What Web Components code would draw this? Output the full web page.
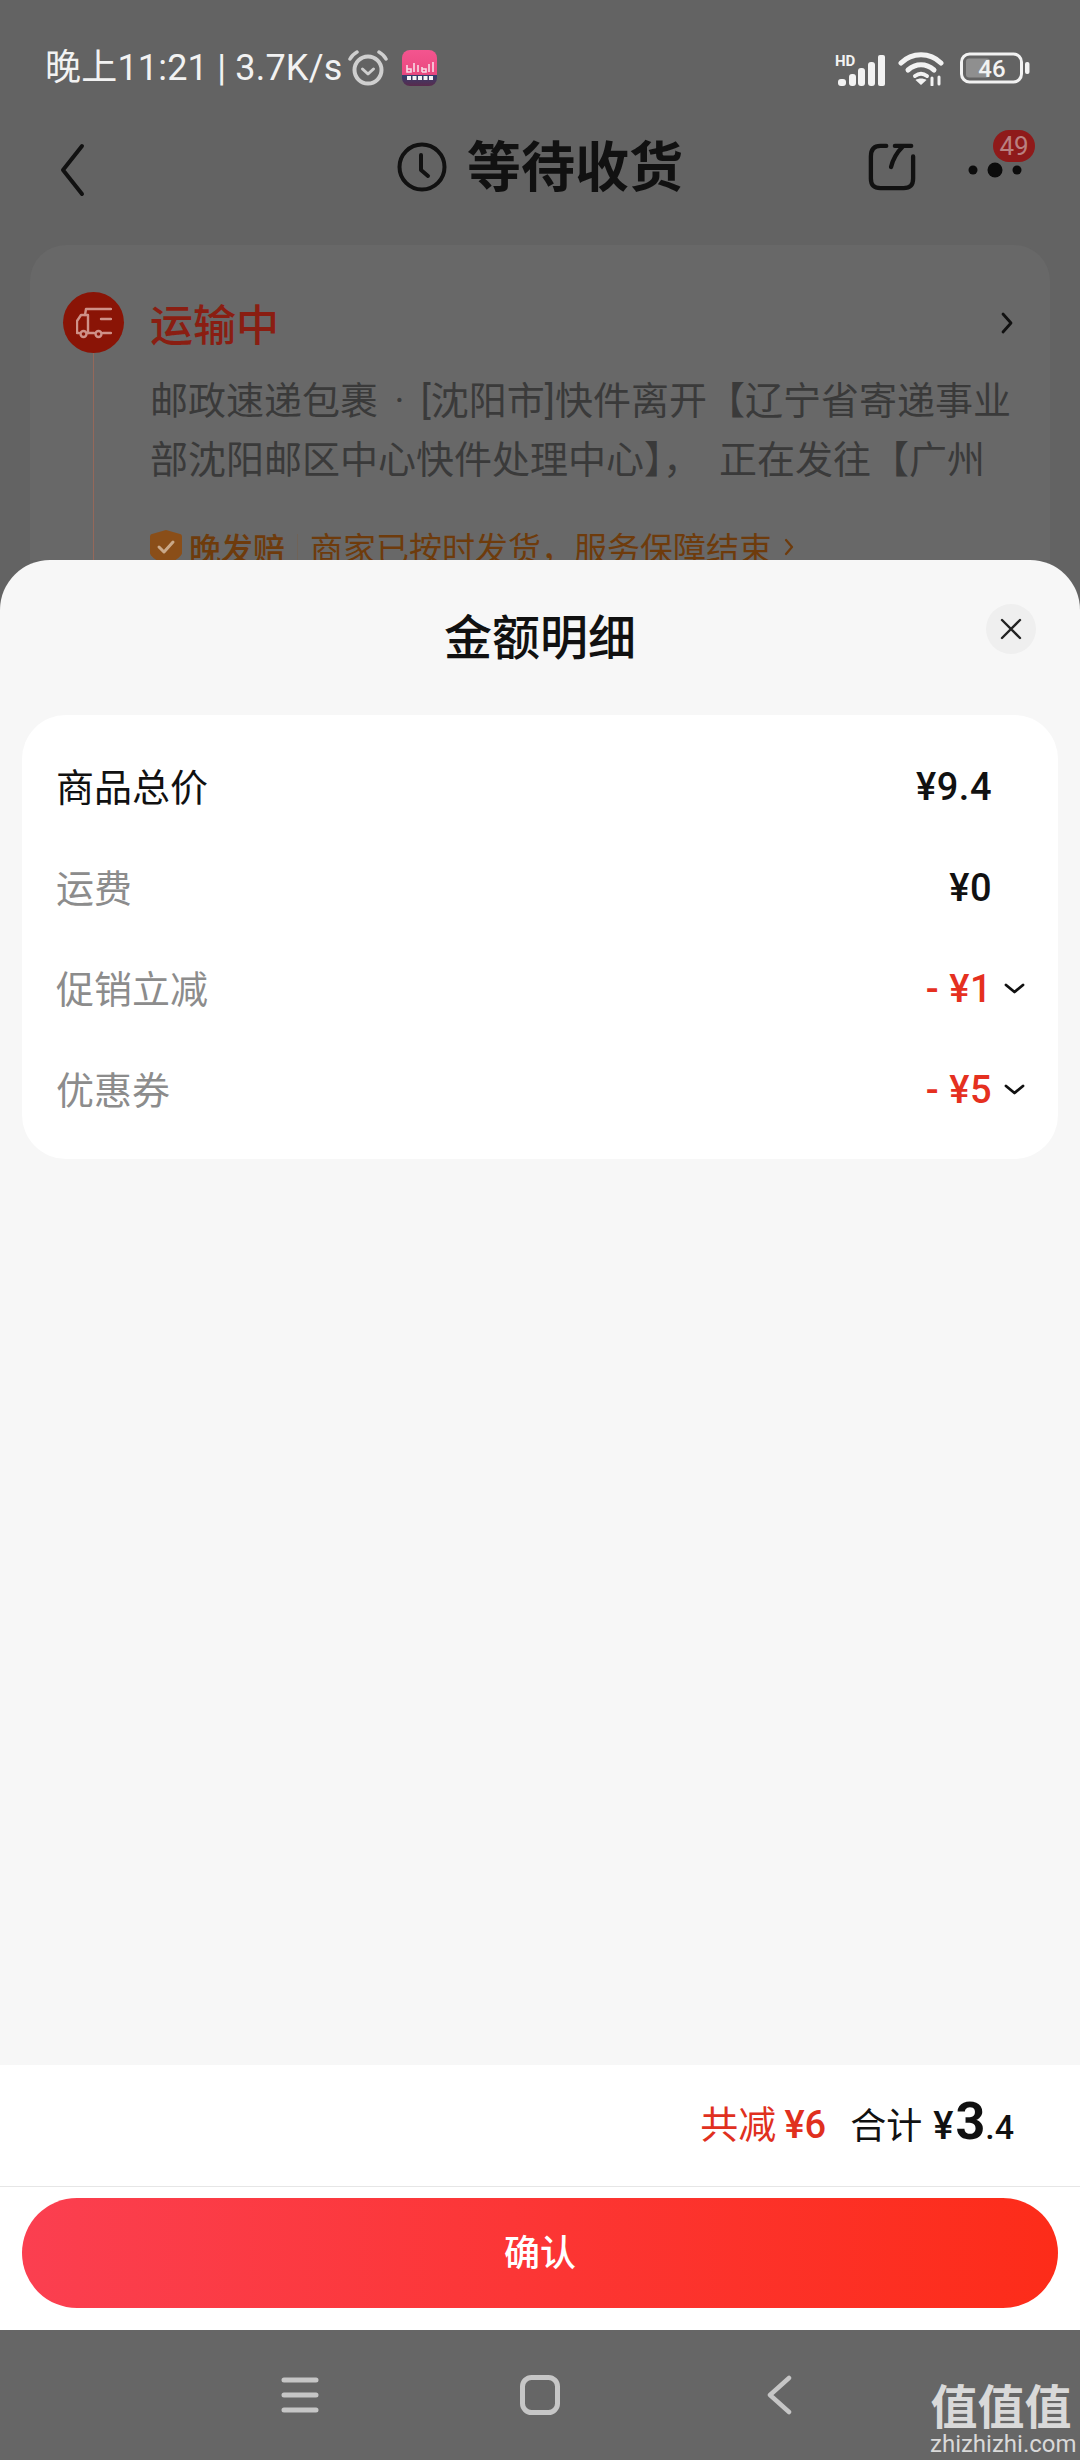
<!DOCTYPE html>
<html lang="zh-CN">
<head>
<meta charset="utf-8">
<title>金额明细</title>
<style>
    html, body { margin: 0; padding: 0; background: #636363; }
    body { font-family: Roboto, "Noto Sans CJK SC", sans-serif; }
</style>
</head>
<body>
<phone-page>
    <order-backdrop>
        <status-bar></status-bar>
        <order-nav>等待收货</order-nav>
        <track-card></track-card>
    </order-backdrop>
    <price-sheet>
        <span slot="title">金额明细</span>
        <price-row strong><span slot="label">商品总价</span>¥9.4</price-row>
        <price-row><span slot="label">运费</span>¥0</price-row>
        <price-row discount><span slot="label">促销立减</span>- ¥1</price-row>
        <price-row discount><span slot="label">优惠券</span>- ¥5</price-row>
        <total-bar slot="footer"></total-bar>
        <confirm-button slot="footer">确认</confirm-button>
    </price-sheet>
    <system-nav></system-nav>
</phone-page>

<script>
class PhonePage extends HTMLElement {
    constructor() {
        super();
        this.attachShadow({ mode: 'open' });
    }
    connectedCallback() {
        this.shadowRoot.innerHTML = `
            <style>
                :host { display: flex; flex-direction: column; width: 1080px; height: 2460px; overflow: hidden; }
            </style>
            <slot></slot>
        `;
    }
}

class OrderBackdrop extends HTMLElement {
    constructor() {
        super();
        this.attachShadow({ mode: 'open' });
    }
    connectedCallback() {
        this.shadowRoot.innerHTML = `
            <style>
                :host { display: block; height: 560px; overflow: hidden; background: #636363; flex-shrink: 0; }
            </style>
            <slot></slot>
        `;
    }
}

class StatusBar extends HTMLElement {
    constructor() {
        super();
        this.attachShadow({ mode: 'open' });
    }
    connectedCallback() {
        this.shadowRoot.innerHTML = `
            <style>
                :host { display: flex; align-items: center; height: 48px; padding: 44px 50px 0 45px; color: #f2f2f2; }
                .time { font-size: 36px; line-height: 48px; white-space: nowrap; letter-spacing: .2px; }
                .alarm { margin-left: 6px; }
                .app { margin-left: 14px; }
                .right { margin-left: auto; display: flex; align-items: center; }
                .wifi { margin-left: 13px; }
                .battery { margin-left: 16px; }
                svg { display: block; flex-shrink: 0; }
            </style>
            <span class="time">晚上11:21 | 3.7K/s</span>
            <svg class="alarm" width="40" height="36" viewBox="0 0 40 36" fill="none" stroke="#cfcfcf">
                <circle cx="20" cy="20" r="13.5" stroke-width="4"/>
                <path d="M14.5 19l5.5 5 5.500-5" stroke-width="3" stroke-linecap="round" stroke-linejoin="round"/>
                <path d="M2 9c1.500-3 3.500-5 7-7M38 9c-1.500-3-3.500-5-7-7" stroke-width="3.500" stroke-linecap="round"/>
            </svg>
            <svg class="app" width="36" height="36" viewBox="0 0 36 36">
                <defs><linearGradient id="bili" x1="0" y1="0" x2="0" y2="1">
                    <stop offset="0" stop-color="#f4558f"/><stop offset=".68" stop-color="#e9487f"/>
                    <stop offset=".7" stop-color="#33406f"/><stop offset="1" stop-color="#5a2a4c"/>
                </linearGradient></defs>
                <rect width="35" height="36" rx="8" fill="url(#bili)"/>
                <path d="M5 15v7h4v-3H5M12 13v9M16 15v7M20 17v5M20 19h4v3h-4M27 14v8M31 12v10" stroke="#f8dbe6" stroke-width="1.600" fill="none"/>
                <path d="M5 28h26" stroke="#f6f6f6" stroke-width="4" stroke-dasharray="4 1.500"/>
            </svg>
            <div class="right">
                <svg width="50" height="38" viewBox="0 -6 50 38">
                    <text x="0" y="11" font-family="Roboto, sans-serif" font-weight="700" font-size="15" fill="#f2f2f2">HD</text>
                    <rect x="3" y="24" width="8" height="7" rx="3" fill="#f2f2f2"/>
                    <rect x="14" y="19" width="7" height="12" rx="3" fill="#f2f2f2"/>
                    <rect x="23" y="13" width="7" height="18" rx="3" fill="#f2f2f2"/>
                    <rect x="33" y="7" width="7" height="24" rx="3" fill="#f2f2f2"/>
                    <rect x="43" y="0" width="7" height="31" rx="2" fill="#f2f2f2"/>
                </svg>
                <svg class="wifi" width="46" height="36" viewBox="0 0 46 36" fill="none" stroke="#f2f2f2" stroke-linecap="round">
                    <path d="M3 13C14 2 32 2 43 13" stroke-width="5"/>
                    <path d="M10 20c8-7 18-7 26 0" stroke-width="5"/>
                    <path d="M17 26c4-3 8-3 12 0" stroke-width="4"/>
                    <path d="M23 35l-5.500-5c3-2 8-2 11 0z" fill="#f2f2f2" stroke="none"/>
                    <path d="M34 28v7M41 27v7" stroke-width="3"/>
                </svg>
                <svg class="battery" width="70" height="32" viewBox="0 0 70 32">
                    <rect x="1.500" y="2" width="60" height="28" rx="8" fill="none" stroke="#f2f2f2" stroke-width="3"/>
                    <rect x="6" y="6.500" width="24" height="19" rx="3" fill="#8f8f8f"/>
                    <rect x="65" y="10" width="4.500" height="12" rx="2" fill="#f2f2f2"/>
                    <text x="32" y="25" text-anchor="middle" font-family="Roboto, sans-serif" font-weight="500" font-size="24" fill="#f2f2f2">46</text>
                </svg>
            </div>
        `;
    }
}

class OrderNav extends HTMLElement {
    constructor() {
        super();
        this.attachShadow({ mode: 'open' });
    }
    connectedCallback() {
        this.shadowRoot.innerHTML = `
            <style>
                :host { display: grid; grid-template-columns: 1fr auto 1fr; align-items: center; height: 72px; padding: 36px 57px 0; color: #111; }
                .back { margin: 6px 0 0 3px; }
                .title { display: flex; align-items: center; gap: 20px; font: 700 54px/72px "Noto Sans CJK SC", sans-serif; }
                .title span { padding-bottom: 6px; }
                .actions { display: flex; justify-content: flex-end; align-items: center; gap: 51px; }
                .more { position: relative; display: block; height: 60px; }
                .badge { position: absolute; top: -7px; right: -12px; width: 42px; height: 32px; border-radius: 16px; background: #8f1a1a; color: #b98080; font: 400 26px/32px Roboto, sans-serif; text-align: center; }
                svg { display: block; }
            </style>
            <svg class="back" width="26" height="56" viewBox="0 0 26 56" fill="none" stroke="#111" stroke-width="4" stroke-linecap="round" stroke-linejoin="round">
                <path d="M22 4L3 28l19 24"/>
            </svg>
            <div class="title">
                <svg width="50" height="50" viewBox="0 0 50 50" fill="none" stroke="#111" stroke-linecap="round" stroke-linejoin="round">
                    <circle cx="25" cy="25" r="22.500" stroke-width="4"/>
                    <path d="M24 13v15l7 6" stroke-width="4"/>
                </svg>
                <span><slot></slot></span>
            </div>
            <div class="actions">
                <svg width="48" height="48" viewBox="0 0 50 50" fill="none" stroke="#111" stroke-width="4.500" stroke-linecap="round" stroke-linejoin="round">
                    <path d="M19 3H13C6 3 3 7 3 14v23c0 7 3 10 10 10h24c7 0 10-3 10-10V14"/>
                    <path d="M24 25c2-8 6-15 12-21M28 3h17"/>
                </svg>
                <div class="more">
                    <svg width="56" height="60" viewBox="0 0 56 60" fill="#0c0c0c">
                        <circle cx="6" cy="33" r="4.500"/><circle cx="28" cy="33" r="7.500"/><circle cx="50" cy="33" r="4.500"/>
                    </svg>
                    <span class="badge">49</span>
                </div>
            </div>
        `;
    }
}

class TrackCard extends HTMLElement {
    constructor() {
        super();
        this.attachShadow({ mode: 'open' });
    }
    connectedCallback() {
        this.shadowRoot.innerHTML = `
            <style>
                :host { display: grid; grid-template-columns: 61px minmax(0, 1fr); column-gap: 26px; margin: 45px 30px 0; padding: 47px 36px 40px 33px; border-radius: 36px; background: #686868; font-family: "Noto Sans CJK SC", sans-serif; }
                .dot { width: 61px; height: 61px; border-radius: 50%; background: #8a1406; display: flex; align-items: center; justify-content: center; }
                .head { display: flex; align-items: center; justify-content: space-between; color: #8a1e12; font: 500 43px/61px "Noto Sans CJK SC", sans-serif; }
                .line { justify-self: center; width: 1px; background: #94685a; }
                .body { margin-top: 19px; font-family: Roboto, "Noto Sans CJK SC", sans-serif; font-size: 38px; line-height: 59px; color: #3a3a3a; white-space: nowrap; }
                .sep { margin: 0 7px; }
                .comma { margin-right: 18px; }
                .tag { display: flex; align-items: center; margin-top: 33px; height: 48px; color: #6e3b0c; font-size: 33px; white-space: nowrap; }
                .tag b { font-weight: 500; font-size: 32px; margin-left: 7px; }
                .tag i { width: 1px; height: 26px; margin: 0 12px; background: #6f6358; }
                .tag .arrow { margin-left: 12px; }
                svg { display: block; }
            </style>
            <div class="dot">
                <svg width="36" height="32" viewBox="0 0 36 32" fill="none" stroke="#cf9188" stroke-width="2.400" stroke-linecap="round" stroke-linejoin="round">
                    <path d="M35 2H10L9 8"/>
                    <path d="M3 26H1V14l4-6h7v18"/>
                    <path d="M25 12h10M27 26h8M12 26h6"/>
                    <circle cx="7.500" cy="27" r="3"/><circle cx="22.500" cy="27" r="3"/>
                </svg>
            </div>
            <div class="head">
                <span>运输中</span>
                <svg width="14" height="22" viewBox="0 0 14 22" fill="none" stroke="#111" stroke-width="2.800" stroke-linecap="round" stroke-linejoin="round"><path d="M3 2l8 9-8 9"/></svg>
            </div>
            <div class="line"></div>
            <div>
                <div class="body">邮政速递包裹<span class="sep"> · </span>[沈阳市]快件离开【辽宁省寄递事业<br>部沈阳邮区中心快件处理中心】<span class="comma">，</span>正在发往【广州</div>
                <div class="tag">
                    <svg width="32" height="36" viewBox="0 0 32 36">
                        <path d="M16 1l14 4c1 0 2 1 2 3v16c0 4-12 11-16 12C12 35 0 28 0 24V8c0-2 1-3 2-3z" fill="#8a4e18"/>
                        <path d="M9 18l5 5 9-10" fill="none" stroke="#c9a888" stroke-width="3" stroke-linecap="round" stroke-linejoin="round"/>
                    </svg>
                    <b>晚发赔</b><i></i><span>商家已按时发货，服务保障结束</span>
                    <svg class="arrow" width="10" height="20" viewBox="0 0 10 20" fill="none" stroke="#6e3b0c" stroke-width="2.200" stroke-linecap="round" stroke-linejoin="round"><path d="M2 3l6 7-6 7"/></svg>
                </div>
            </div>
        `;
    }
}

class PriceSheet extends HTMLElement {
    constructor() {
        super();
        this.attachShadow({ mode: 'open' });
    }
    connectedCallback() {
        this.shadowRoot.innerHTML = `
            <style>
                :host { display: flex; flex-direction: column; height: 1770px; flex-shrink: 0; background: #f7f7f7; border-radius: 50px 50px 0 0; overflow: hidden; font-family: "Noto Sans CJK SC", sans-serif; }
                .header { display: flex; align-items: center; justify-content: center; position: relative; height: 155px; padding-bottom: 8px; box-sizing: border-box; font-size: 48px; font-weight: 500; color: #111; }
                .close { position: absolute; top: 44px; right: 44px; width: 50px; height: 50px; border-radius: 50%; background: #efefef; display: flex; align-items: center; justify-content: center; }
                .list { margin: 0 22px; padding: 21px 0 19px; border-radius: 44px; background: #fff; }
                .grow { flex: 1; }
                .footer { background: #fff; }
                svg { display: block; }
            </style>
            <div class="header">
                <slot name="title"></slot>
                <div class="close">
                    <svg width="22" height="22" viewBox="0 0 22 22" fill="none" stroke="#222" stroke-width="2.400" stroke-linecap="round"><path d="M2 2l18 18M20 2L2 20"/></svg>
                </div>
            </div>
            <div class="list"><slot></slot></div>
            <div class="grow"></div>
            <div class="footer"><slot name="footer"></slot></div>
        `;
    }
}

class PriceRow extends HTMLElement {
    constructor() {
        super();
        this.attachShadow({ mode: 'open' });
    }
    connectedCallback() {
        const discount = this.hasAttribute('discount');
        const chevron = discount
            ? `<svg width="21" height="11" viewBox="0 0 21 11" fill="none" stroke="#111" stroke-width="2.800" stroke-linecap="round" stroke-linejoin="round"><path d="M2 2l8.500 7L19 2"/></svg>`
            : '';
        this.shadowRoot.innerHTML = `
            <style>
                :host { display: flex; align-items: center; height: 101px; padding: 0 33px 0 34px; font-family: "Noto Sans CJK SC", sans-serif; font-size: 38px; color: #8c8c8c; }
                :host([strong]) { color: #111; }
                ::slotted([slot="label"]) { margin-top: -5px; }
                .amount { margin-left: auto; font: 500 38px/48px Roboto, "Noto Sans CJK SC", sans-serif; letter-spacing: .5px; color: #111; white-space: nowrap; }
                :host([discount]) .amount { color: #e5301f; }
                .chev { width: 21px; margin-left: 12px; }
                svg { display: block; }
            </style>
            <slot name="label"></slot>
            <span class="amount"><slot></slot></span>
            <span class="chev">${chevron}</span>
        `;
    }
}

class TotalBar extends HTMLElement {
    constructor() {
        super();
        this.attachShadow({ mode: 'open' });
    }
    connectedCallback() {
        this.shadowRoot.innerHTML = `
            <style>
                :host { display: flex; align-items: center; justify-content: flex-end; height: 122px; box-sizing: border-box; padding: 0 66px 8px 0; border-bottom: 1px solid #e6e6e6; font-family: "Noto Sans CJK SC", sans-serif; font-size: 36px; white-space: nowrap; color: #111; }
                .off { color: #e0301e; font-size: 38px; }
                .num { font-family: Roboto, sans-serif; font-weight: 500; font-size: 38px; }
                .off .num { margin-left: 8px; }
                .sum { display: flex; align-items: baseline; margin-left: 24px; }
                .sum .num { margin-left: 11px; }
                .big { font-size: 52px; font-weight: 700; margin-left: 2px; }
                .small { font-size: 34px; }
            </style>
            <span class="off">共减<span class="num">¥6</span></span>
            <span class="sum">合计<span class="num">¥<span class="big">3</span><span class="small">.4</span></span></span>
        `;
    }
}

class ConfirmButton extends HTMLElement {
    constructor() {
        super();
        this.attachShadow({ mode: 'open' });
    }
    connectedCallback() {
        this.shadowRoot.innerHTML = `
            <style>
                :host { display: block; padding: 11px 22px 22px; }
                .btn { height: 110px; box-sizing: border-box; padding-bottom: 6px; border-radius: 55px; display: flex; align-items: center; justify-content: center; background: linear-gradient(to right, #fb3f50, #fd2c19); color: #fff; font: 500 36px/48px "Noto Sans CJK SC", sans-serif; }
            </style>
            <div class="btn"><slot></slot></div>
        `;
    }
}

class SystemNav extends HTMLElement {
    constructor() {
        super();
        this.attachShadow({ mode: 'open' });
    }
    connectedCallback() {
        this.shadowRoot.innerHTML = `
            <style>
                :host { display: block; position: relative; height: 130px; background: #666; flex-shrink: 0; }
                .keys { display: grid; grid-template-columns: 38px 40px 26px; justify-content: start; column-gap: 201px; padding: 45px 0 0 281px; }
                .keys svg:last-child { margin-left: 5px; }
                .mark { position: absolute; left: 930px; top: 50px; width: 142px; color: #d9d9d9; text-align: center; white-space: nowrap; }
                .mark b { display: block; font: 700 47px/48px "Noto Sans CJK SC", sans-serif; }
                .mark span { display: block; font: 400 24px/24px Roboto, sans-serif; margin-top: 4px; }
                svg { display: block; }
            </style>
            <div class="keys">
                <svg width="38" height="40" viewBox="0 0 38 40" fill="none" stroke="#c6c6c6" stroke-width="5" stroke-linecap="round">
                    <path d="M3 5h32M3 20h32M3 35h32"/>
                </svg>
                <svg width="40" height="40" viewBox="0 0 40 40" fill="none" stroke="#c6c6c6" stroke-width="5">
                    <rect x="2.500" y="2.500" width="35" height="35" rx="9"/>
                </svg>
                <svg width="26" height="40" viewBox="0 0 26 40" fill="none" stroke="#c6c6c6" stroke-width="4.500" stroke-linecap="round" stroke-linejoin="round">
                    <path d="M23 3L4 20l19 17"/>
                </svg>
            </div>
            <div class="mark"><b>值值值</b><span>zhizhizhi.com</span></div>
        `;
    }
}

customElements.define('phone-page', PhonePage);
customElements.define('order-backdrop', OrderBackdrop);
customElements.define('status-bar', StatusBar);
customElements.define('order-nav', OrderNav);
customElements.define('track-card', TrackCard);
customElements.define('price-sheet', PriceSheet);
customElements.define('price-row', PriceRow);
customElements.define('total-bar', TotalBar);
customElements.define('confirm-button', ConfirmButton);
customElements.define('system-nav', SystemNav);
</script>
</body>
</html>
